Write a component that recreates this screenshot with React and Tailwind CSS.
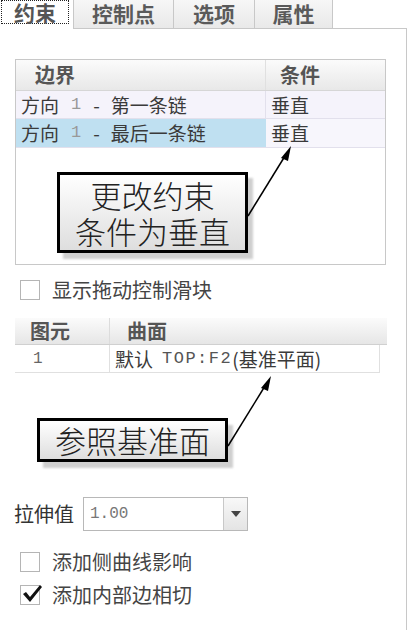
export default function App() {
  const ui = { fontFamily: '"Noto Sans CJK SC", "Noto Sans", sans-serif' };
  const mono = { fontFamily: '"Liberation Mono", "DejaVu Sans Mono", monospace' };
  return (
    <div className="relative w-[411px] h-[630px] overflow-hidden bg-white text-[#333]" style={ui}>
      {/* Tabs */}
      <div className="flex h-[29px] items-stretch">
        <div className="w-[73px] bg-white pl-[1px] pt-0">
          <div className="w-[68px] h-[24px] border border-dotted border-[#222] flex items-center justify-center text-[21px] font-bold text-[#555] leading-[22px]">约束</div>
        </div>
        <div className="w-[101px] border-l border-r border-b border-[#c8c8c8] bg-gradient-to-b from-[#f7f7f7] to-[#e9e9e9] flex items-start justify-center pt-[1px] text-[21px] font-bold text-[#5a5a5a] leading-[24px]">控制点</div>
        <div className="w-[81px] border-r border-b border-[#c8c8c8] bg-gradient-to-b from-[#f7f7f7] to-[#e9e9e9] flex items-start justify-center pt-[1px] text-[21px] font-bold text-[#5a5a5a] leading-[24px]">选项</div>
        <div className="w-[78px] border-r border-b border-[#c8c8c8] bg-gradient-to-b from-[#f7f7f7] to-[#e9e9e9] flex items-start justify-center pt-[1px] text-[21px] font-bold text-[#5a5a5a] leading-[24px]">属性</div>
        <div className="w-[74px] border-b border-[#c8c8c8]"></div>
      </div>

      {/* Panel */}
      <div className="w-[407px] h-[601px] border-r border-[#c8c8c8] pt-[30px]">
        {/* Table 1 */}
        <div className="ml-[15px] w-[371px] h-[206px] border border-[#c8c8c8] bg-white">
          <div className="flex h-[31px] bg-gradient-to-b from-[#fbfbfb] to-[#e8e8e8] border-b border-[#d6d6d6] text-[20px] font-bold text-[#555] leading-[28px]">
            <div className="w-[250px] border-r border-[#e0e0e0] flex items-center pl-[19px]">边界</div>
            <div className="flex-1 flex items-center pl-[14px]">条件</div>
          </div>
          <div className="flex h-[28px] bg-[#f5f3fb] border-b border-[#e2e0ec] text-[19px] leading-[26px] text-[#3a3a3a]">
            <div className="w-[250px] border-r border-[#e2e0ec] flex items-center pl-[5px]">
              <span>方向</span>
              <span className="ml-[12px] text-[#999] text-[17px]" style={mono}>1</span>
              <span className="ml-[12px]">-</span>
              <span className="ml-[11px]">第一条链</span>
            </div>
            <div className="flex-1 flex items-center pl-[5px]">垂直</div>
          </div>
          <div className="flex h-[29px] border-b border-[#e2e0ec] text-[19px] leading-[26px] text-[#3a3a3a]">
            <div className="w-[250px] bg-[#bfe0f1] flex items-center pl-[5px]">
              <span>方向</span>
              <span className="ml-[12px] text-[#999] text-[17px]" style={mono}>1</span>
              <span className="ml-[12px]">-</span>
              <span className="ml-[11px]">最后一条链</span>
            </div>
            <div className="flex-1 bg-[#f7f6fc] flex items-center pl-[5px]">垂直</div>
          </div>
        </div>

        {/* Checkbox 1 */}
        <div className="flex items-center mt-[15px] ml-[20px] h-[20px] gap-[12px]">
          <div className="w-[20px] h-[20px] border border-[#b5b5b5] bg-white shrink-0"></div>
          <span className="text-[20px] leading-[24px] text-[#444]">显示拖动控制滑块</span>
        </div>

        {/* Table 2 */}
        <div className="mt-[18px] ml-[15px] w-[372px]">
          <div className="flex h-[27px] bg-gradient-to-b from-[#fbfbfb] to-[#e6e6e6] border-b border-[#d0d0d0] text-[20px] font-bold text-[#555] leading-[26px]">
            <div className="w-[95px] border-r border-[#dcdcdc] flex items-center pl-[15px]">图元</div>
            <div className="flex-1 flex items-center pl-[17px]">曲面</div>
          </div>
          <div className="flex h-[28px] w-[365px] border-b border-r border-[#e0e0e0] text-[19px] leading-[26px] text-[#3a3a3a]">
            <div className="w-[95px] border-r border-[#e0e0e0] flex items-center pl-[18px] text-[#666] text-[16px]" style={mono}>1</div>
            <div className="flex-1 flex items-center pl-[5px]">
              <span>默认</span>
              <span className="ml-[9px] text-[17px] tracking-[1.5px] text-[#555]" style={mono}>TOP:F2</span>
              <span>(基准平面)</span>
            </div>
          </div>
        </div>

        {/* Dropdown */}
        <div className="flex items-center mt-[124px] ml-[14px] h-[34px] gap-[9px]">
          <span className="text-[20px] leading-[26px] text-[#333]">拉伸值</span>
          <div className="flex w-[165px] h-[34px] border border-[#b8b8b8] bg-white">
            <div className="flex-1 flex items-center pl-[6px] text-[16px] text-[#777]" style={mono}>1.00</div>
            <div className="w-[24px] border-l border-[#c8c8c8] bg-gradient-to-b from-[#f8f8f8] to-[#e4e4e4] flex items-center justify-center">
              <svg width="10" height="6" viewBox="0 0 10 6"><path d="M0 0 L10 0 L5 6 Z" fill="#444" /></svg>
            </div>
          </div>
        </div>

        {/* Checkboxes */}
        <div className="flex items-center mt-[21px] ml-[20px] h-[20px] gap-[12px]">
          <div className="w-[20px] h-[20px] border border-[#b5b5b5] bg-white shrink-0"></div>
          <span className="text-[20px] leading-[24px] text-[#444]">添加侧曲线影响</span>
        </div>
        <div className="flex items-center mt-[12px] ml-[20px] h-[21px] gap-[12px]">
          <div className="relative w-[20px] h-[20px] border border-[#b5b5b5] bg-white shrink-0">
            <svg className="absolute left-[0px] top-[-2px]" width="22" height="20" viewBox="0 0 22 20">
              <path d="M2 10 L5 8 L9 13 L19 1 L21 3 L9 18 Z" fill="#111" />
            </svg>
          </div>
          <span className="text-[20px] leading-[24px] text-[#444]">添加内部边相切</span>
        </div>
      </div>

      {/* Callout 1 */}
      <div className="absolute left-[63px] top-[178px] w-[190px] h-[81px] bg-[#cfcfcf] blur-[1px]"></div>
      <div className="absolute left-[57px] top-[172px] w-[191px] h-[81px] border-[3px] border-black bg-gradient-to-b from-white to-[#dedede] flex flex-col items-center justify-center text-[31px] leading-[36px] font-light text-[#222]">
        <span>更改约束</span>
        <span>条件为垂直</span>
      </div>

      {/* Callout 2 */}
      <div className="absolute left-[43px] top-[425px] w-[190px] h-[43px] bg-[#cfcfcf] blur-[1px]"></div>
      <div className="absolute left-[37px] top-[418px] w-[191px] h-[44px] border-[3px] border-black bg-gradient-to-b from-white to-[#dedede] flex items-center justify-center text-[31px] leading-[36px] font-light text-[#222]">
        参照基准面
      </div>

      {/* Arrows */}
      <svg className="absolute left-0 top-0 pointer-events-none" width="411" height="630" viewBox="0 0 411 630">
        <line x1="248" y1="216" x2="285" y2="156" stroke="#000" strokeWidth="1.5" />
        <path d="M291 146 L281 158 L288 161 Z" fill="#000" />
        <line x1="228" y1="446" x2="265" y2="386" stroke="#000" strokeWidth="1.5" />
        <path d="M271 376 L261 388 L268 391 Z" fill="#000" />
      </svg>
    </div>
  );
}
